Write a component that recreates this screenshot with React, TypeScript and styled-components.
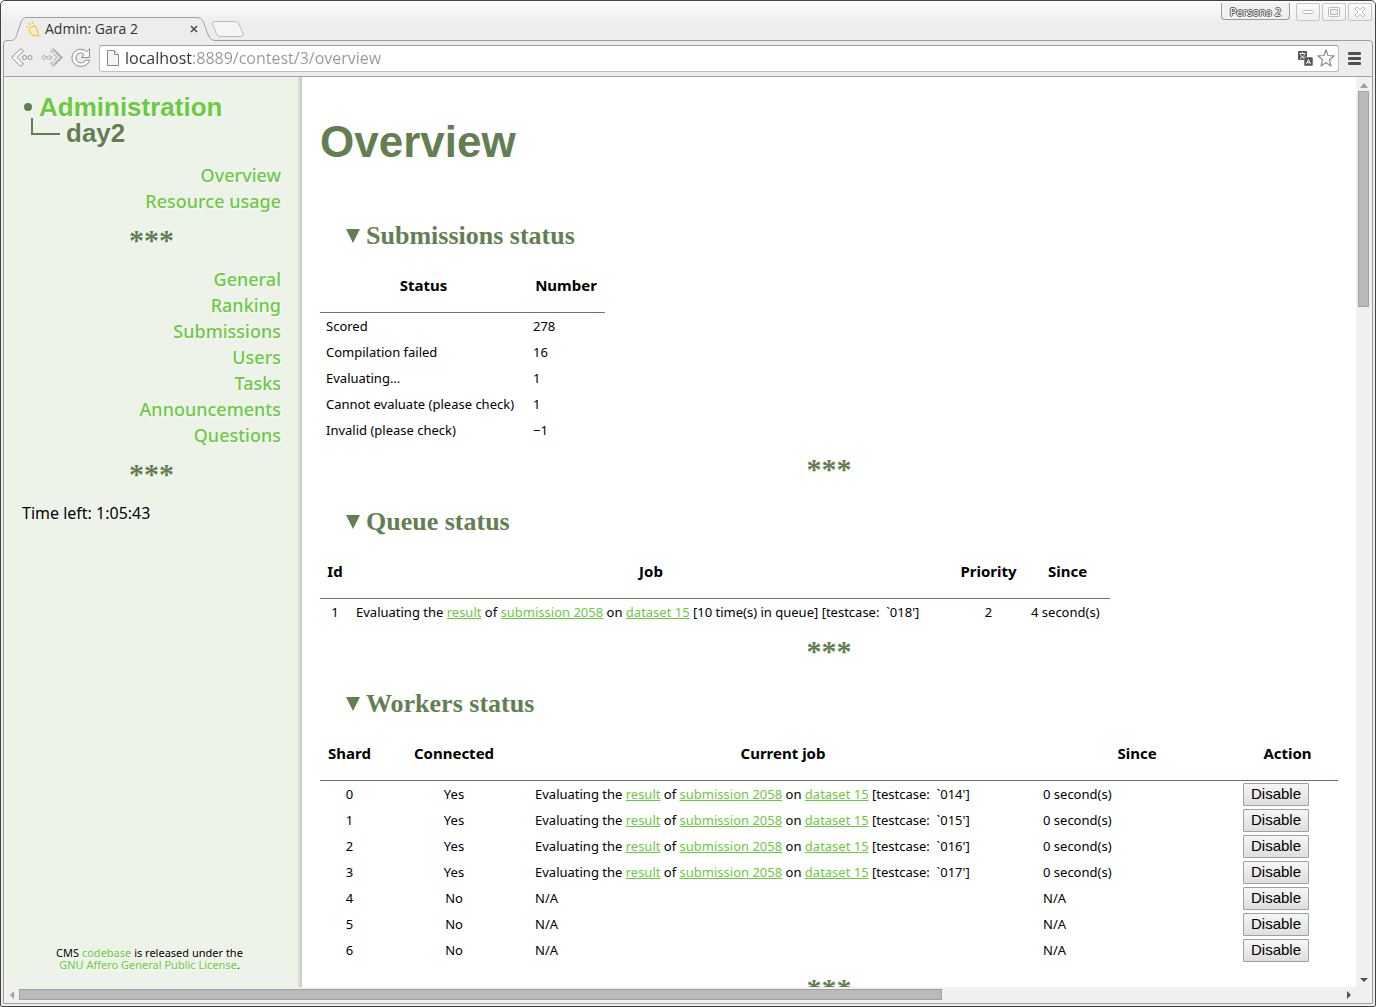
import React from "react";
import styled, { createGlobalStyle, css } from "styled-components";

const sans = `"Noto Sans", "Open Sans", sans-serif`;
const heading = `"Liberation Sans", Arial, sans-serif`;
const serif = `"Liberation Serif", "Times New Roman", serif`;
const moss = "#637f52";
const leaf = "#6bca3f";

const GlobalStyle = createGlobalStyle`
  * { box-sizing: border-box; }
  html, body, #root { height: 100%; }
  body { margin: 0; background: #fff; color: #000; font: 13px/26px ${sans}; }
  a { color: ${leaf}; }
`;

/* ---------- window frame ---------- */

const Frame = styled.div`
  display: flex;
  flex-direction: column;
  height: 100vh;
  padding: 0 2px 2px;
  border: 1px solid #45433f;
  border-radius: 5px 5px 2px 2px;
  background: linear-gradient(#fdfdfd, #ededed 22px);
  overflow: hidden;
`;

const TitleBar = styled.header`
  display: flex;
  flex: none;
  height: 39px;
  padding: 0 1px 0 7px;
`;

const Tab = styled.div`
  position: relative;
  z-index: 1;
  display: flex;
  align-items: center;
  align-self: flex-end;
  width: 205px;
  height: 24px;
  margin-bottom: -1px;
  padding: 0 17px 0 16px;
  gap: 5px;
  font: 14px/20px "Open Sans", sans-serif;
  color: #2e3436;
`;

const TabShape = styled.svg`
  position: absolute;
  inset: 0;
  z-index: -1;
`;

const TabTitle = styled.span`
  flex: 1;
`;

const PlainButton = styled.button`
  display: flex;
  flex: none;
  align-items: center;
  justify-content: center;
  padding: 0;
  border: 0;
  background: none;
`;

const NewTab = styled(PlainButton)`
  align-self: flex-end;
  height: 22px;
  margin-left: -4px;
`;

const WindowControls = styled.div`
  display: flex;
  align-items: flex-start;
  gap: 2px;
  margin-left: auto;
  padding-top: 2px;
`;

const Persona = styled.button`
  height: 17px;
  margin-right: 4px;
  padding: 0 8px;
  border: 1px solid #9a9a9a;
  border-top: 0;
  border-radius: 0 0 4px 4px;
  background: #f1f1f1;
  color: #fff;
  font: 11px/17px "Open Sans", sans-serif;
  text-shadow: 1px 0 #555, -1px 0 #555, 0 1px #555, 0 -1px #555;
`;

const WindowButton = styled(PlainButton)`
  width: 24px;
  height: 18px;
  border: 1px solid #c4c4c4;
  border-radius: 2px;
`;

const Browser = styled.div`
  display: flex;
  flex: 1;
  flex-direction: column;
  min-height: 0;
  border: 1px solid #a09fa0;
  border-radius: 4px 4px 0 0;
  background: #ededed;
`;

const Toolbar = styled.nav`
  display: flex;
  flex: none;
  align-items: center;
  height: 36px;
  padding: 0 11px 1px 7px;
  gap: 8px;
  border-bottom: 1px solid #a3a3a3;
`;

const AddressBox = styled.div`
  display: flex;
  flex: 1;
  align-items: center;
  height: 27px;
  margin-right: 1px;
  padding: 0 3px 0 7px;
  gap: 6px;
  border: 1px solid #bdbdbd;
  border-top-color: #9d9d9d;
  border-radius: 3px;
  background: #fff;
`;

const Address = styled.input`
  flex: 1;
  min-width: 0;
  padding: 0;
  border: 0;
  outline: 0;
  font: 16px/20px "Open Sans", sans-serif;
  color: #2e3436;
  background: linear-gradient(90deg, #2e3436 68px, #959798 68px);
  background-clip: text;
  -webkit-text-fill-color: transparent;
`;

const AddressActions = styled.div`
  display: flex;
  align-items: center;
  gap: 4px;
`;

/* ---------- page area with scroll bars ---------- */

const Viewport = styled.div`
  display: grid;
  flex: 1;
  grid-template-columns: minmax(0, 1fr) 16px;
  grid-template-rows: minmax(0, 1fr) 16px;
  min-height: 0;
  background: #f0f0f0;
`;

const Page = styled.div`
  display: flex;
  background: #fff;
  overflow: hidden;
`;

const Track = styled.div<{ $vertical?: boolean }>`
  display: flex;
  align-items: center;
  padding: ${(p) => (p.$vertical ? "0 3px 0 2px" : "2px 0 3px")};
  flex-direction: ${(p) => (p.$vertical ? "column" : "row")};
`;

const Thumb = styled.div<{ $share: number }>`
  flex: ${(p) => p.$share};
  align-self: stretch;
  border: 1px solid #a0a0a0;
  background: #bababa;
`;

const Rest = styled.div<{ $share: number }>`
  flex: ${(p) => p.$share};
`;

const Arrow = styled.svg`
  flex: none;
`;

/* ---------- sidebar ---------- */

const Sidebar = styled.aside`
  display: flex;
  flex: none;
  flex-direction: column;
  width: 298px;
  padding: 17px 19px 16px 18px;
  border-right: 2px solid #cbd0c6;
  background: linear-gradient(90deg, #edf3e9 294px, #dce2d7 294px);
  text-shadow: 1px 1px 2px #fff;
`;

const Crumbs = styled.div`
  padding-bottom: 16px;
  color: ${moss};
  font: bold 26px/26px ${heading};
`;

const Crumb = styled.div`
  display: flex;
  align-items: center;
  gap: 6px;
  height: 26px;

  a {
    text-decoration: none;
  }
`;

const Elbow = styled.svg`
  overflow: visible;
`;

const Menu = styled.ul`
  margin: 0;
  padding: 0;
  list-style: none;
  text-align: right;
  font-size: 18px;
  font-weight: 500;

  a {
    text-decoration: none;
  }
`;

const Stars = styled.div`
  height: 26px;
  margin: 13px 0;
  color: ${moss};
  font: bold 30px/26px ${serif};
  text-align: center;
`;

const TimeLeft = styled.div`
  font-size: 16px;
`;

const Licence = styled.footer`
  margin-top: auto;
  padding-right: 4px;
  font-size: 11px;
  line-height: 12px;
  text-align: center;

  a {
    text-decoration: none;
  }
`;

/* ---------- main content ---------- */

const Main = styled.main`
  flex: 1;
  min-width: 0;
  padding: 39px 18px 0;
`;

const Title = styled.h1`
  margin: 0;
  color: ${moss};
  font: bold 44px/52px ${heading};
`;

const Section = styled.section<{ $first?: boolean }>`
  padding-top: ${(p) => (p.$first ? 55 : 14)}px;
`;

const SectionTitle = styled.h2`
  display: flex;
  align-items: center;
  gap: 6px;
  margin: 0 0 12px;
  padding-left: 26px;
  color: ${moss};
  font: bold 26px/26px ${serif};
`;

const Table = styled.table<{ $width: string }>`
  width: ${(p) => p.$width};
  table-layout: fixed;
  border-collapse: separate;
  border-spacing: 0;
`;

const Col = styled.col<{ $width?: number }>`
  ${(p) => p.$width && css`width: ${p.$width}px;`}
`;

const Th = styled.th`
  height: 52px;
  padding: 0 0 4px;
  border-bottom: 1px solid ${moss};
  font-size: 15px;
  font-weight: 700;
`;

const Td = styled.td<{ $center?: boolean }>`
  height: 26px;
  padding: 0 6px;
  text-align: ${(p) => (p.$center ? "center" : "left")};
  white-space: nowrap;
`;

const Action = styled.button`
  display: block;
  height: 23px;
  padding: 0 7px;
  border: 1px solid #a0a0a0;
  border-radius: 1px;
  background: linear-gradient(#f6f6f6, #dedede);
  color: #000;
  font: 15px/20px ${heading};
`;

const Disclosure = () => (
  <svg width="14" height="14" viewBox="0 0 14 14" aria-hidden="true">
    <path d="M0 0H14L7 14Z" fill={moss} />
  </svg>
);

const Job = ({ note }: { note: string }) => (
  <>
    Evaluating the <a href="#result">result</a> of <a href="#submission">submission 2058</a> on{" "}
    <a href="#dataset">dataset 15</a> {note}
  </>
);

type Column = { label: string; width?: number; center?: boolean };

const DataTable = ({ width, columns, rows }: { width: string; columns: Column[]; rows: React.ReactNode[][] }) => (
  <Table $width={width}>
    <colgroup>
      {columns.map((c) => (
        <Col key={c.label} $width={c.width} />
      ))}
    </colgroup>
    <thead>
      <tr>
        {columns.map((c) => (
          <Th key={c.label} scope="col">{c.label}</Th>
        ))}
      </tr>
    </thead>
    <tbody>
      {rows.map((row, i) => (
        <tr key={i}>
          {row.map((cell, j) => (
            <Td key={j} $center={columns[j].center}>{cell}</Td>
          ))}
        </tr>
      ))}
    </tbody>
  </Table>
);

const statusRows = [
  ["Scored", "278"],
  ["Compilation failed", "16"],
  ["Evaluating...", "1"],
  ["Cannot evaluate (please check)", "1"],
  ["Invalid (please check)", "−1"],
];

const workerRows = [0, 1, 2, 3, 4, 5, 6].map((shard) => {
  const connected = shard < 4;
  return [
    shard,
    connected ? "Yes" : "No",
    connected ? <Job note={`[testcase: \u00a0\`01${shard + 4}']`} /> : "N/A",
    connected ? "0 second(s)" : "N/A",
    <Action type="button">Disable</Action>,
  ];
});

const MenuList = ({ items }: { items: string[] }) => (
  <Menu>
    {items.map((item) => (
      <li key={item}>
        <a href={`#${item}`}>{item}</a>
      </li>
    ))}
  </Menu>
);

const Chrome = () => (
  <TitleBar>
    <Tab>
      <TabShape width="205" height="24" aria-hidden="true">
        <path
          d="M0 23.5C4 23.5 5 22 6 20L11.500 4Q13 .5 16 .5H187Q191 .5 193 4L199 20Q201 23.500 205 23.500V24H0Z"
          fill="#ededed"
        />
        <path
          d="M0 23.500C4 23.500 5 22 6 20L11.500 4Q13 .5 16 .5H187Q191 .5 193 4L199 20Q201 23.500 205 23.500"
          fill="none"
          stroke="#a0a0a0"
        />
      </TabShape>
      <svg width="14" height="17" viewBox="0 0 14 17" fill="none" stroke="#fbcb2d" strokeWidth="1.300" aria-hidden="true">
        <path d="M4 7L8.500 4.500C11 7.500 12.500 9.500 12 12.500L12.500 15L10.500 14.800C7 15 3.500 12.500 3.200 9.500Z" />
        <path d="M2.500 2L4.500 4M6.500 .5V3M0.500 5.500L2.500 6" />
      </svg>
      <TabTitle>Admin: Gara 2</TabTitle>
      <PlainButton type="button" aria-label="Close tab">
        <svg width="8" height="8" viewBox="0 0 8 8" stroke="#4a4a4a" strokeWidth="1.500">
          <path d="M1 1L7 7M7 1L1 7" />
        </svg>
      </PlainButton>
    </Tab>
    <NewTab type="button" aria-label="New tab">
      <svg width="34" height="18" viewBox="0 0 34 18">
        <path
          d="M3.500 1.500H24Q27 1.500 28 4L32 14Q32.500 16.500 30 16.500H9Q6.500 16.500 5.500 14L1.500 4Q1 1.500 3.500 1.500Z"
          fill="#f5f5f5"
          stroke="#bcbcbc"
        />
      </svg>
    </NewTab>
    <WindowControls>
      <Persona type="button">Persona 2</Persona>
      <WindowButton type="button" aria-label="Minimise">
        <svg width="12" height="4"><rect x=".5" y=".5" width="11" height="3" rx="1" fill="#fff" stroke="#bbb" /></svg>
      </WindowButton>
      <WindowButton type="button" aria-label="Maximise">
        <svg width="12" height="10" fill="none" stroke="#bbb">
          <rect x=".5" y=".5" width="11" height="9" rx="1" fill="#fff" />
          <rect x="2.500" y="2.500" width="7" height="5" fill="#ededed" />
        </svg>
      </WindowButton>
      <WindowButton type="button" aria-label="Close window">
        <svg width="12" height="12" viewBox="0 0 12 12" fill="#fff" stroke="#bbb">
          <path d="M1 3L3 1L6 4L9 1L11 3L8 6L11 9L9 11L6 8L3 11L1 9L4 6Z" />
        </svg>
      </WindowButton>
    </WindowControls>
  </TitleBar>
);

const BrowserToolbar = () => (
  <Toolbar>
    <PlainButton type="button" aria-label="Back">
      <svg width="22" height="20" viewBox="0 0 22 20" fill="#fafafa" stroke="#8c8c8c">
        <path d="M.7 9.500L9.500 .7L12.500 3L6 9.500L12.500 16L9.500 18.300Z" />
        <circle cx="13.500" cy="9.500" r="2" />
        <circle cx="19" cy="9.500" r="2" />
      </svg>
    </PlainButton>
    <PlainButton type="button" aria-label="Forward">
      <svg width="22" height="20" viewBox="0 0 22 20" fill="#e4e4e4" stroke="#777" strokeDasharray="1 1">
        <path d="M21.300 9.500L12.500 .7L9.500 3L16 9.500L9.500 16L12.500 18.300Z" />
        <path d="M12 2L19.500 9.500L12 17M13.500 2L20.500 9.500L13.500 17" fill="none" />
        <circle cx="8.500" cy="9.500" r="2" />
        <circle cx="3" cy="9.500" r="2" />
      </svg>
    </PlainButton>
    <PlainButton type="button" aria-label="Reload">
      <svg width="20" height="20" viewBox="0 0 20 20" fill="#fafafa" stroke="#8c8c8c">
        <path d="M15.500 3.500L18.500 .8V9.500H10.500L13 6.500C10 3.500 5 5.500 5 10C5 15.500 12.500 16.500 14.500 12H18.500C16.500 21 1 20.500 1 10C1 1.500 10.500 -1 15.500 3.500Z" />
      </svg>
    </PlainButton>
    <AddressBox>
      <svg width="12" height="16" viewBox="0 0 12 16" fill="#f4f4f4" stroke="#888" aria-hidden="true">
        <path d="M.5 .5H7.500L11.500 4.500V15.500H.5Z" />
        <path d="M7.500 .5V4.500H11.500" />
      </svg>
      <Address aria-label="Address" defaultValue="localhost:8889/contest/3/overview" />
      <AddressActions>
        <PlainButton type="button" aria-label="Translate">
          <svg width="15" height="15" viewBox="0 0 15 15">
            <rect width="9" height="9" rx="1" fill="#555" />
            <path d="M1.500 2.500H7.500M4.500 1V2.500M2.500 3.500C3 5 5 7 7 7.500M6.500 3.500C6 5 4 7 2 7.500" stroke="#fff" fill="none" />
            <rect x="6" y="6" width="9" height="9" rx="1" fill="#555" stroke="#fff" strokeWidth=".5" />
            <path d="M8.500 13L10.500 8.500L12.500 13M9 11.500H12" stroke="#fff" fill="none" />
          </svg>
        </PlainButton>
        <PlainButton type="button" aria-label="Bookmark">
          <svg width="18" height="18" viewBox="0 0 18 18" fill="#fff" stroke="#8a8a8a" strokeWidth="1.200" strokeLinejoin="round">
            <path d="M9 .8L11 6.500L17.200 6.800L12.500 10.800L14 17L9 13.500L4 17L5.500 10.800L.8 6.800L7 6.500Z" />
          </svg>
        </PlainButton>
      </AddressActions>
    </AddressBox>
    <PlainButton type="button" aria-label="Menu">
      <svg width="13" height="13" fill="#505050">
        <rect width="13" height="3" rx="1" />
        <rect y="5" width="13" height="3" rx="1" />
        <rect y="10" width="13" height="3" rx="1" />
      </svg>
    </PlainButton>
  </Toolbar>
);

export default function App() {
  return (
    <>
      <GlobalStyle />
      <Frame>
        <Chrome />
        <Browser>
          <BrowserToolbar />
          <Viewport>
            <Page>
              <Sidebar>
                <Crumbs>
                  <Crumb>
                    <svg width="11" height="26" aria-hidden="true">
                      <circle cx="6" cy="13" r="4" fill={moss} />
                    </svg>
                    <a href="#admin">Administration</a>
                  </Crumb>
                  <Crumb>
                    <Elbow width="38" height="26" fill="none" stroke={moss} strokeWidth="2" aria-hidden="true">
                      <path d="M10 -2V14H38" />
                    </Elbow>
                    day2
                  </Crumb>
                </Crumbs>
                <MenuList items={["Overview", "Resource usage"]} />
                <Stars>***</Stars>
                <MenuList
                  items={["General", "Ranking", "Submissions", "Users", "Tasks", "Announcements", "Questions"]}
                />
                <Stars>***</Stars>
                <TimeLeft>Time left: 1:05:43</TimeLeft>
                <Licence>
                  CMS <a href="#code">codebase</a> is released under the
                  <br />
                  <a href="#licence">GNU Affero General Public License</a>.
                </Licence>
              </Sidebar>
              <Main>
                <Title>Overview</Title>
                <Section $first>
                  <SectionTitle><Disclosure />Submissions status</SectionTitle>
                  <DataTable
                    width="285px"
                    columns={[{ label: "Status", width: 207 }, { label: "Number" }]}
                    rows={statusRows}
                  />
                </Section>
                <Stars>***</Stars>
                <Section>
                  <SectionTitle><Disclosure />Queue status</SectionTitle>
                  <DataTable
                    width="790px"
                    columns={[
                      { label: "Id", width: 30, center: true },
                      { label: "Job" },
                      { label: "Priority", width: 73, center: true },
                      { label: "Since", width: 85 },
                    ]}
                    rows={[["1", <Job note={"[10 time(s) in queue] [testcase: \u00a0`018']"} />, "2", "4 second(s)"]]}
                  />
                </Section>
                <Stars>***</Stars>
                <Section>
                  <SectionTitle><Disclosure />Workers status</SectionTitle>
                  <DataTable
                    width="100%"
                    columns={[
                      { label: "Shard", width: 59, center: true },
                      { label: "Connected", width: 150, center: true },
                      { label: "Current job" },
                      { label: "Since", width: 200 },
                      { label: "Action", width: 101 },
                    ]}
                    rows={workerRows}
                  />
                </Section>
                <Stars>***</Stars>
              </Main>
            </Page>
            <Track $vertical aria-hidden="true">
              <Arrow width="8" height="14"><path d="M0 11L4 6L8 11Z" fill="#a0a0a0" /></Arrow>
              <Thumb $share={214} />
              <Rest $share={668} />
              <Arrow width="8" height="14"><path d="M0 5L4 9L8 5Z" fill="#505050" /></Arrow>
            </Track>
            <Track aria-hidden="true">
              <Arrow width="15" height="8"><path d="M10 0L6 4L10 8Z" fill="#a0a0a0" /></Arrow>
              <Thumb $share={922} />
              <Rest $share={400} />
              <Arrow width="15" height="8"><path d="M6 0L10 4L6 8Z" fill="#505050" /></Arrow>
            </Track>
          </Viewport>
        </Browser>
      </Frame>
    </>
  );
}
